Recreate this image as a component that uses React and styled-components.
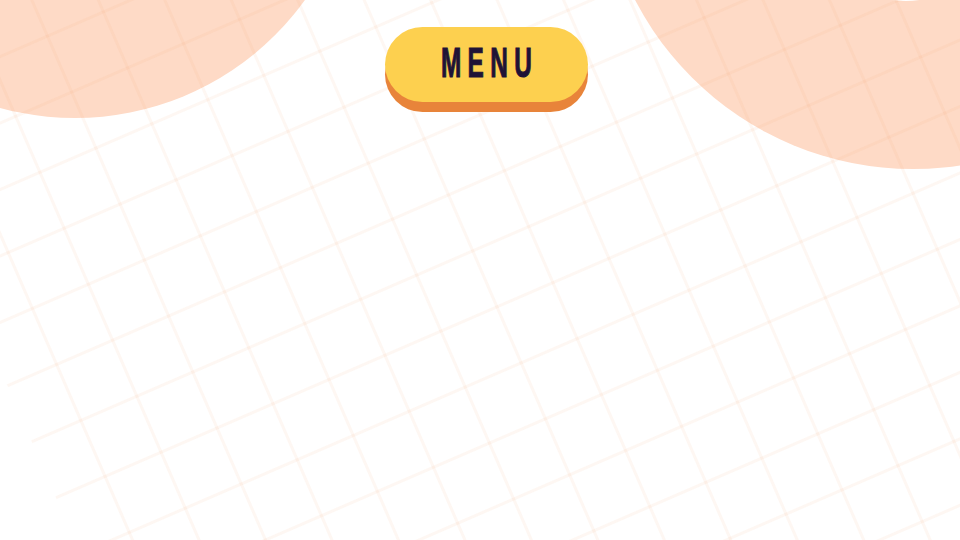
import React from "react";
import styled, { createGlobalStyle } from "styled-components";

const GlobalStyle = createGlobalStyle`
  html, body, #root {
    margin: 0;
    padding: 0;
    width: 100%;
    height: 100%;
  }
  body {
    background: #ffffff;
    font-family: "Liberation Sans", Arial, sans-serif;
  }
`;

const Page = styled.div`
  position: relative;
  width: 960px;
  height: 540px;
  overflow: hidden;
  background: #ffffff;
`;

// soft peach circles peeking in from the top corners
const Blob = styled.div`
  position: absolute;
  left: ${(p) => p.$x - p.$r}px;
  top: ${(p) => p.$y - p.$r}px;
  width: ${(p) => p.$r * 2}px;
  height: ${(p) => p.$r * 2}px;
  border-radius: 50%;
  background: ${(p) => p.$color || "#fedac6"};
`;

// rotated paper grid, left edge runs down-right across the bottom-left corner
const Grid = styled.div`
  position: absolute;
  left: -310px;
  top: -348px;
  width: 2000px;
  height: 2000px;
  transform-origin: 0 0;
  transform: rotate(-23.4deg);
  background-image: linear-gradient(
      to right,
      rgba(240, 150, 90, 0.075) 3px,
      transparent 3px
    ),
    linear-gradient(to bottom, rgba(240, 150, 90, 0.075) 3px, transparent 3px);
  background-size: 61px 61px;
  background-position: 52px 5px;
  filter: blur(0.4px);
`;

const Header = styled.header`
  position: relative;
  display: flex;
  justify-content: center;
  padding-top: 27px;
  padding-left: 12px;
`;

const MenuButton = styled.button`
  display: flex;
  align-items: center;
  justify-content: center;
  width: 203px;
  height: 75px;
  padding: 0;
  border: none;
  border-radius: 38px;
  background: #fdd04f;
  box-shadow: 0 10px 0 #e8843a;
  cursor: pointer;
`;

const MenuLabel = styled.span`
  display: inline-block;
  padding-left: 11px;
  font-family: "Liberation Sans", Arial, sans-serif;
  font-weight: 700;
  font-size: 42px;
  line-height: 1;
  letter-spacing: 11px;
  color: #1f1336;
  -webkit-text-stroke: 1.1px #1f1336;
  transform: translateY(-2px) scaleX(0.58);
`;

const App = () => {
  return (
    <>
      <GlobalStyle />
      <Page>
        <Blob $x={75} $y={-165} $r={283} />
        <Blob $x={913} $y={-144} $r={313} />
        <Blob $x={906} $y={-89} $r={90} $color="#ffffff" />
        <Grid />
        <Header>
          <MenuButton type="button">
            <MenuLabel>MENU</MenuLabel>
          </MenuButton>
        </Header>
      </Page>
    </>
  );
};

export default App;
